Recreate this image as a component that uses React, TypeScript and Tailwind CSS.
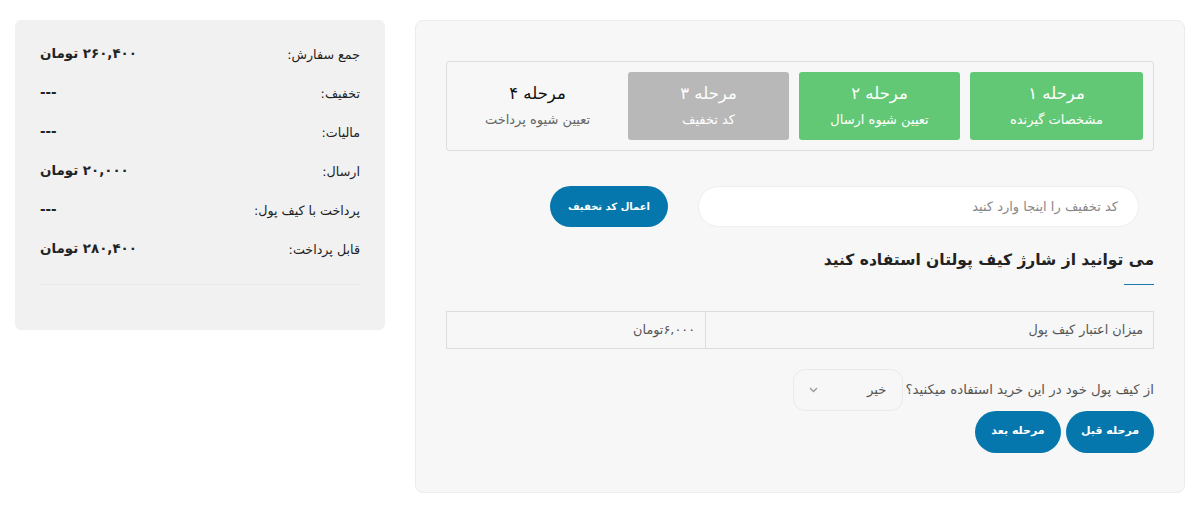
const steps = [
  { n: 'مرحله ۱', t: 'مشخصات گیرنده', cls: 'w-[173px] bg-[#63c876] text-white' },
  { n: 'مرحله ۲', t: 'تعیین شیوه ارسال', cls: 'w-[161px] bg-[#63c876] text-white' },
  { n: 'مرحله ۳', t: 'کد تخفیف', cls: 'w-[161px] bg-[#b8b8b8] text-white' },
  { n: 'مرحله ۴', t: 'تعیین شیوه پرداخت', cls: 'w-[161px] text-[#111]', sub: 'text-[#666]' },
];

const summary = [
  { label: 'جمع سفارش:', value: '۲۶۰,۴۰۰ تومان' },
  { label: 'تخفیف:', value: '---' },
  { label: 'مالیات:', value: '---' },
  { label: 'ارسال:', value: '۲۰,۰۰۰ تومان' },
  { label: 'پرداخت با کیف پول:', value: '---' },
  { label: 'قابل پرداخت:', value: '۲۸۰,۴۰۰ تومان' },
];

export default function App() {
  return (
    <div dir="rtl" className="w-[1200px] h-[525px] bg-white font-['DejaVu_Sans',sans-serif] flex items-start gap-[30px] px-[15px] pt-[20px]">
      {/* main checkout panel */}
      <div className="w-[770px] h-[473px] bg-[#f7f7f7] border border-[#ececec] rounded-lg pt-[40px] px-[30px]">
        <div className="border border-[#dddddd] rounded-[3px] p-[10px] flex gap-[10px]">
          {steps.map((s) => (
            <div key={s.n} className={`h-[68px] rounded-[3px] flex flex-col items-center justify-center ${s.cls}`}>
              <div className="text-[16.5px] leading-none">{s.n}</div>
              <div className={`text-[13px] leading-none mt-[11px] ${s.sub ?? ''}`}>{s.t}</div>
            </div>
          ))}
        </div>

        <div className="flex items-center gap-[30px] mt-[35px] pr-[15px]">
          <div className="w-[441px] h-[41px] bg-white border border-[#eeeeee] rounded-full flex items-center px-[20px] text-[13px] text-[#888]">
            کد تخفیف را اینجا وارد کنید
          </div>
          <button className="w-[118px] h-[41px] bg-[#0577ad] text-white rounded-full text-[10px] font-bold">
            اعمال کد تخفیف
          </button>
        </div>

        <h2 className="mt-[26px] text-[15.5px] font-bold text-[#222] leading-none">
          می توانید از شارژ کیف پولتان استفاده کنید
        </h2>
        <div className="w-[30px] h-px bg-[#1a7aad] mt-[15px]"></div>

        <div className="mt-[26px] flex border border-[#dddddd] h-[38px] text-[12.8px] text-[#555]">
          <div className="w-[448px] border-l border-[#dddddd] flex items-center px-[10px]">میزان اعتبار کیف پول</div>
          <div className="flex-1 flex items-center px-[10px]">۶,۰۰۰تومان</div>
        </div>

        <div className="mt-[20px] flex items-center gap-[3px] text-[13.3px] text-[#555]">
          <span>از کیف پول خود در این خرید استفاده میکنید؟</span>
          <div className="w-[110px] h-[42px] border border-[#eaeaea] rounded-xl flex items-center justify-between px-[15px]">
            <span>خیر</span>
            <svg width="9" height="6" viewBox="0 0 9 6" fill="none" stroke="#999" strokeWidth="1.3">
              <path d="M1 1l3.5 3.5L8 1" />
            </svg>
          </div>
        </div>

        <div className="flex gap-[5px]">
          <button className="w-[88px] h-[42px] bg-[#0577ad] text-white rounded-full text-[11px] font-bold">مرحله قبل</button>
          <button className="w-[86px] h-[42px] bg-[#0577ad] text-white rounded-full text-[11px] font-bold">مرحله بعد</button>
        </div>
      </div>

      {/* order summary */}
      <div className="w-[370px] h-[310px] bg-[#f1f1f1] rounded-md px-[25px] pt-[15px]">
        {summary.map((r) => (
          <div key={r.label} className="h-[39px] flex items-center justify-between text-[#222]">
            <span className="text-[12.7px]">{r.label}</span>
            <span className="text-[13.4px] font-bold">{r.value}</span>
          </div>
        ))}
        <div className="mt-[15px] h-px bg-[#e8e8e8]"></div>
      </div>
    </div>
  );
}
